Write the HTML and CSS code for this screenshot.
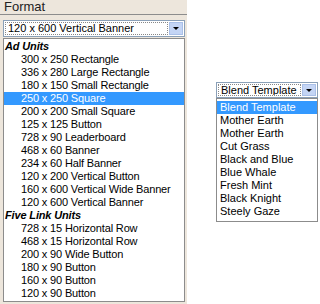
FILE: index.html
```html
<!DOCTYPE html>
<html lang="en">
<head>
    <meta charset="UTF-8">
    <title>Format</title>
    <link rel="stylesheet" href="styles.css">
</head>
<body>
    <div class="page">
        <div class="panel">
            <div class="panel-title">Format</div>
            <div class="combo combo-wide">
                <div class="combo-text">120 x 600 Vertical Banner</div>
                <div class="combo-btn"><span class="arrow"></span></div>
            </div>
            <div class="list list-wide">
                <div class="group">Ad Units</div>
                <div class="item">300 x 250 Rectangle</div>
                <div class="item">336 x 280 Large Rectangle</div>
                <div class="item">180 x 150 Small Rectangle</div>
                <div class="item selected">250 x 250 Square</div>
                <div class="item">200 x 200 Small Square</div>
                <div class="item">125 x 125 Button</div>
                <div class="item">728 x 90 Leaderboard</div>
                <div class="item">468 x 60 Banner</div>
                <div class="item">234 x 60 Half Banner</div>
                <div class="item">120 x 200 Vertical Button</div>
                <div class="item">160 x 600 Vertical Wide Banner</div>
                <div class="item">120 x 600 Vertical Banner</div>
                <div class="group">Five Link Units</div>
                <div class="item">728 x 15 Horizontal Row</div>
                <div class="item">468 x 15 Horizontal Row</div>
                <div class="item">200 x 90 Wide Button</div>
                <div class="item">180 x 90 Button</div>
                <div class="item">160 x 90 Button</div>
                <div class="item">120 x 90 Button</div>
            </div>
        </div>
        <div class="side">
            <div class="combo combo-small">
                <div class="combo-text">Blend Template</div>
                <div class="combo-btn"><span class="arrow"></span></div>
            </div>
            <div class="list list-small">
                <div class="opt selected">Blend Template</div>
                <div class="opt">Mother Earth</div>
                <div class="opt">Mother Earth</div>
                <div class="opt">Cut Grass</div>
                <div class="opt">Black and Blue</div>
                <div class="opt">Blue Whale</div>
                <div class="opt">Fresh Mint</div>
                <div class="opt">Black Knight</div>
                <div class="opt">Steely Gaze</div>
            </div>
        </div>
    </div>
</body>
</html>
```

FILE: styles.css
```css
body {
    margin: 0;
    background-color: #fff;
    font-family: 'Liberation Sans', Arial, sans-serif;
    font-size: 11px;
    color: #000;
}
.page {
    display: flex;
    align-items: flex-start;
}
.panel {
    width: 187px;
    height: 304px;
    background-color: #ede6dc;
}
.panel-title {
    height: 14px;
    line-height: 13px;
    padding-left: 4px;
    font-size: 13px;
    color: #222;
    border-bottom: 1px solid #8c8c8c;
}
.combo {
    display: flex;
    box-sizing: border-box;
    background-color: #fff;
    border: 1px solid #8aa0b8;
    padding: 1px;
}
.combo-wide {
    width: 182px;
    height: 17px;
    margin: 5px 0 0 3px;
}
.combo-small {
    width: 102px;
    height: 16px;
}
.combo-text {
    flex: 1;
    border: 1px dotted #888;
    padding-left: 2px;
    line-height: 11px;
    white-space: nowrap;
    overflow: hidden;
}
.combo-btn {
    width: 12px;
    margin-left: 1px;
    background-color: #c4d5f5;
    border: 1px solid #aac0e8;
    display: flex;
    align-items: center;
    justify-content: center;
}
.arrow {
    width: 0;
    height: 0;
    border-left: 3px solid transparent;
    border-right: 3px solid transparent;
    border-top: 3px solid #000;
}
.list {
    box-sizing: border-box;
    background-color: #fff;
    border: 1px solid #8c8c8c;
}
.list-wide {
    width: 182px;
    margin: 1px 0 0 3px;
    padding: 1px 0;
    letter-spacing: -0.15px;
}
.list-small {
    width: 102px;
    padding: 2px 0 3px 0;
}
.group, .item, .opt {
    height: 13px;
    line-height: 13px;
    white-space: nowrap;
}
.group {
    padding-left: 1px;
    font-weight: bold;
    font-style: italic;
}
.item {
    padding-left: 17px;
}
.opt {
    padding-left: 3px;
}
.selected {
    background-color: #3399ff;
    color: #fff;
}
.side {
    margin: 82px 0 0 29px;
}
```
